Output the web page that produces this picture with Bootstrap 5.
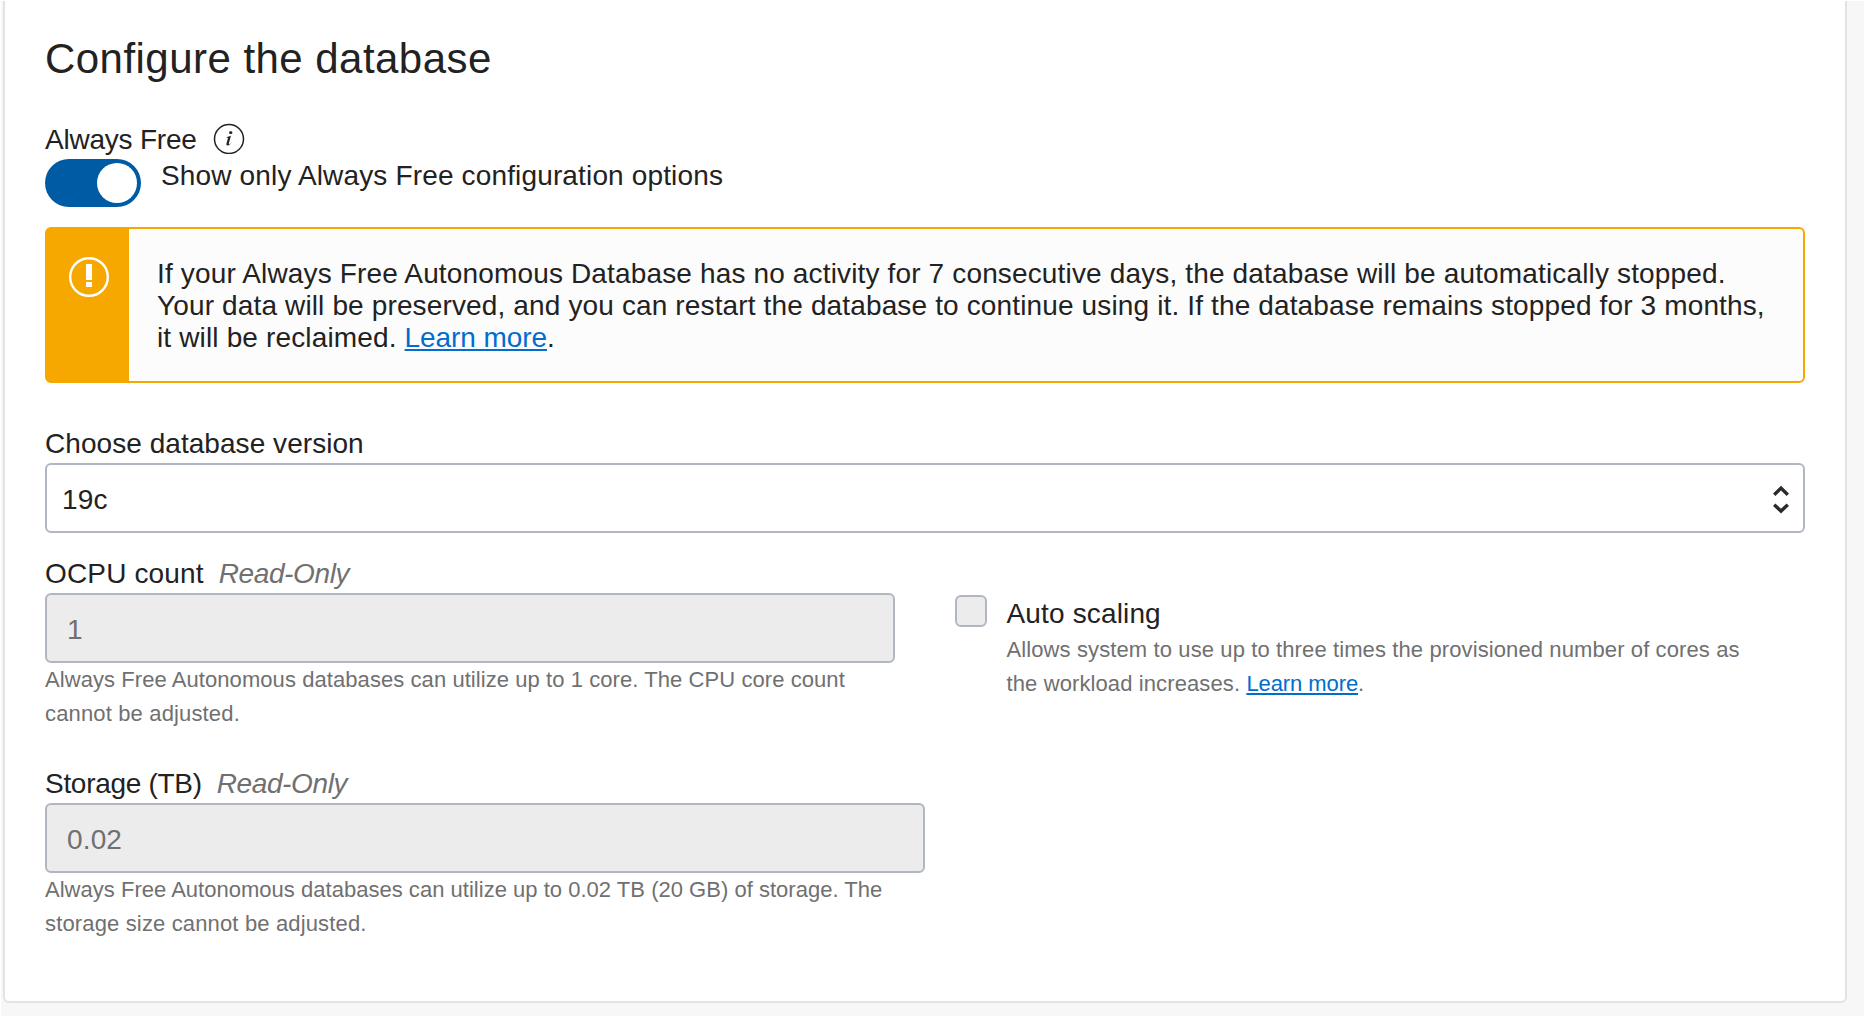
<!DOCTYPE html>
<html lang="en">
<head>
<meta charset="utf-8">
<title>Configure the database</title>
<link href="https://cdn.jsdelivr.net/npm/bootstrap@5.3.0/dist/css/bootstrap.min.css" rel="stylesheet">
<style>
  body { font-family: "Liberation Sans", Arial, sans-serif; font-size: 28px; line-height: 32px; color: #222; background: #fff; height: 1016px; overflow: hidden; padding: 1px 0 0 1px; letter-spacing: .15px; }
  .page-shell { background: #f7f7f7; height: 1015px; padding: 0 17px 0 2px; }
  .panel { border: 2px solid #e2e2e8; border-top: 0; border-radius: 0 0 6px 6px; background: #fff; height: 1002px; padding: 33px 40px 0; }
  .panel-title { font-size: 42px; line-height: 50px; font-weight: 400; margin: 0 0 38px; letter-spacing: .46px; color: #222; }
  .label-row { height: 37px; line-height: 34px; }
  .label-text { letter-spacing: -.22px; padding-top: 1px; }
  .switch { width: 96px; height: 48px; border-radius: 24px; background: #005ba5; padding: 4px; }
  .knob { width: 40px; height: 40px; border-radius: 50%; background: #fff; }
  .switch-text { padding: 1px 0 0 20px; }
  .notice { margin: 20px 0 44px; height: 156px; border: 2px solid #f6a800; border-radius: 6px; background: #fcfcfc; }
  .notice-icon { width: 82px; background: #f6a800; padding: 28px 0 0 22px; }
  .notice-text { padding: 29px 0 0 28px; white-space: nowrap; }
  .line-tight { letter-spacing: .14px; }
  .field-label { padding-top: 1px; margin-bottom: 3px; letter-spacing: .05px; white-space: pre; }
  .label-ocpu { letter-spacing: .15px; }
  .label-storage { letter-spacing: -.3px; }
  .field { height: 70px; border: 2px solid #b1b7c1; border-radius: 6px; padding-top: 4px; }
  .field-pick { padding-left: 15px; padding-right: 14px; }
  .field-ro { background: #ececec; color: #707070; padding-left: 20px; }
  .hint { font-size: 22px; line-height: 34px; color: #707070; white-space: nowrap; }
  .hint-ocpu { letter-spacing: .07px; }
  .hint-storage { letter-spacing: .02px; }
  .hint-auto { letter-spacing: .11px; margin-top: 3px; }
  .ro { color: #707070; font-style: italic; margin-left: 15px; letter-spacing: -.38px; }
  .pane-left { padding-right: 30px; }
  .pane-right { padding-left: 30px; }
  .storage-row { margin-top: 36px; }
  .tick { width: 32px; height: 32px; border: 2px solid #b1b7c1; border-radius: 6px; background: #ececec; margin-top: 38px; }
  .auto-copy { padding: 41px 0 0 19.5px; }
  a { color: #006dcf; letter-spacing: -.08px; text-decoration-line: underline; text-decoration-thickness: 2px; text-underline-offset: 2px; text-decoration-skip-ink: none; }
</style>
</head>
<body>
<div class="page-shell">
  <main class="panel">
    <h1 class="panel-title">Configure the database</h1>
    <div class="label-row d-flex align-items-start">
      <span class="label-text">Always Free</span>
      <svg class="ms-3" width="32" height="32" viewBox="0 0 32 32"><circle cx="16" cy="17" r="14.5" fill="none" stroke="#222" stroke-width="1.5"/><path d="M13.4 15.2 L17.9 13.7 L15.8 21.5 Q15.6 22.8 16.4 22.3 L18.5 20.5 Q16.6 23.7 14.3 23.5 Q13 23.2 13.5 21.4 L15 16 Q14.8 15.3 13.3 15.6Z" fill="#222"/><ellipse cx="17.7" cy="10.7" rx="1.7" ry="1.4" fill="#222"/></svg>
    </div>
    <div class="d-flex align-items-start">
      <div class="switch d-flex justify-content-end"><div class="knob"></div></div>
      <span class="switch-text">Show only Always Free configuration options</span>
    </div>
    <div class="notice d-flex">
      <div class="notice-icon flex-shrink-0"><svg class="d-block" width="40" height="40" viewBox="0 0 40 40"><circle cx="20" cy="20" r="18.8" fill="none" stroke="#fff" stroke-width="2.4"/><path d="M17 7h6v16h-6zM17 25h6v5h-6z" fill="#fff"/></svg></div>
      <div class="notice-text">If your Always Free Autonomous Database has no activity for 7 consecutive days, the database will be automatically stopped.<br><span class="line-tight">Your data will be preserved, and you can restart the database to continue using it. If the database remains stopped for 3 months,</span><br>it will be reclaimed. <a href="#">Learn more</a>.</div>
    </div>
    <div class="field-label">Choose database version</div>
    <div class="field field-pick d-flex align-items-center justify-content-between">
      <span>19c</span>
      <svg width="16" height="30" viewBox="0 0 16 30"><path d="M1.2 9.7 8 3.1l6.8 6.6M1.2 19.7 8 26.1l6.8-6.4" fill="none" stroke="#2b2b2b" stroke-width="3.4"/></svg>
    </div>
    <div class="row g-0 mt-4">
      <div class="col-6 pane-left">
        <div class="field-label label-ocpu">OCPU count<span class="ro">Read-Only</span></div>
        <div class="field field-ro d-flex align-items-center">1</div>
        <div class="hint"><span class="hint-ocpu">Always Free Autonomous databases can utilize up to 1 core. The CPU core count</span><br>cannot be adjusted.</div>
      </div>
      <div class="col-6 d-flex pane-right">
        <div class="tick flex-shrink-0"></div>
        <div class="auto-copy">
          <div>Auto scaling</div>
          <div class="hint hint-auto">Allows system to use up to three times the provisioned number of cores as<br>the workload increases. <a href="#">Learn more</a>.</div>
        </div>
      </div>
    </div>
    <div class="row g-0 storage-row">
      <div class="col-6">
        <div class="field-label label-storage">Storage (TB)<span class="ro">Read-Only</span></div>
        <div class="field field-ro d-flex align-items-center">0.02</div>
        <div class="hint"><span class="hint-storage">Always Free Autonomous databases can utilize up to 0.02 TB (20 GB) of storage. The</span><br>storage size cannot be adjusted.</div>
      </div>
    </div>
  </main>
</div>
<script src="https://cdn.jsdelivr.net/npm/bootstrap@5.3.0/dist/js/bootstrap.bundle.min.js"></script>
</body>
</html>
